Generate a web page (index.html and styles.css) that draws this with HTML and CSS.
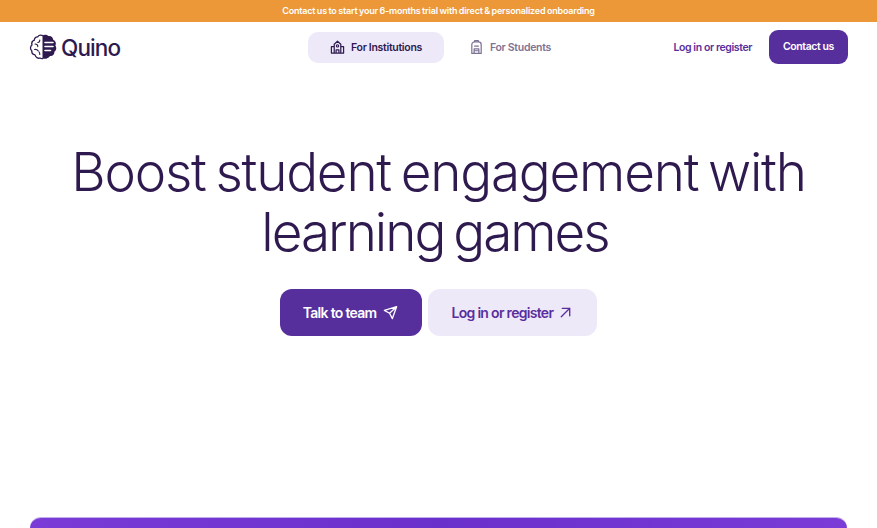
FILE: index.html
```html
<!DOCTYPE html>
<html lang="en">
	<head>
		<meta charset="UTF-8">
		<title>Quino</title>
		<link rel="stylesheet" href="styles.css">
	</head>
	<body>
		<div class="banner">Contact us to start your 6-months trial with direct &amp; personalized onboarding</div>

		<nav class="nav">
			<a class="logo">
				<svg class="logo-icon" width="28" height="26" viewBox="0 0 28 26">
					<path d="M14 1.600C12 .8 9.800 1 8.800 2.800 6.800 2.600 5.200 4.200 5.400 6.200 3.200 7 2.400 9 3 11 1 12.600 1 15.400 2.800 16.800 2.600 19 4 20.600 6 20.800 6.600 23.200 9 24.800 11 24 12.200 24.800 13.200 24.800 14 24.400" fill="none" stroke="#2e1a4f" stroke-width="1.300" stroke-linejoin="round"/>
					<path d="M6 10C7.800 10 8.800 11 8.800 12.600M5.500 15.500C7 15.200 8.300 15.600 9.200 16.800M10.800 6C10.800 7.500 10 8.500 8.800 8.500M10.800 20.500C10.800 19.500 10.800 18.500 10 17.800" fill="none" stroke="#2e1a4f" stroke-width="1.100" stroke-linecap="round"/>
					<path d="M13.500 1.500C15 .4 18 .6 19.400 2 22 1.600 24 3.200 24.200 5.800 26.600 6.800 27.600 9.400 26.400 11.600 27.900 13.600 27.500 16.600 25.400 17.800 25.600 20.400 23.600 22.400 21 22 19.400 24.600 16 25.400 13.500 24.400Z" fill="#2e1a4f"/>
					<path d="M16 8.500H24M16 12.500H24M16 16.500H21.500" stroke="#fff" stroke-width="1.600" stroke-linecap="round"/>
				</svg>
				<span>Quino</span>
			</a>

			<div class="tabs">
				<a class="tab active">
					<svg width="15" height="16" viewBox="0 0 16 16" fill="none" stroke="currentColor" stroke-width="1.300" stroke-linejoin="round">
						<path d="M1.500 14.500V7.500H4.500V14.500ZM11.500 14.500V7.500H14.500V14.500ZM4.500 14.500V5L8 1.800 11.500 5V14.500ZM1 14.500H15"/>
						<path d="M6.500 14.500V11H9.500V14.500"/>
						<circle cx="8" cy="6.800" r="1.200"/>
					</svg>
					For Institutions
				</a>
				<a class="tab">
					<svg width="15" height="16" viewBox="0 0 16 16" fill="none" stroke="currentColor" stroke-width="1.300" stroke-linejoin="round">
						<path d="M3 14.800V5.500C3 3.600 4.500 2.600 6 2.600H10C11.500 2.600 13 3.600 13 5.500V14.800Z"/>
						<path d="M6 2.600V1.200H10V2.600M5.500 7H10.500M5.500 14.800V10H10.500V14.800M5.500 12H10.500"/>
					</svg>
					For Students
				</a>
			</div>

			<div class="nav-right">
				<a class="login-link">Log in or register</a>
				<a class="contact-btn">Contact us</a>
			</div>
		</nav>

		<section class="hero">
			<h1>Boost student engagement with <span class="tight">learning games</span></h1>
			<div class="hero-buttons">
				<a class="btn btn-dark">
					Talk to team
					<svg width="15" height="15" viewBox="0 0 16 16" fill="none" stroke="currentColor" stroke-width="1.400" stroke-linejoin="round" stroke-linecap="round">
						<path d="M14.500 1.800 1.500 5.800 7 8.800 10 14.500ZM14.500 1.800 7 8.800"/>
					</svg>
				</a>
				<a class="btn btn-light">
					Log in or register
					<svg width="15" height="15" viewBox="0 0 16 16" fill="none" stroke="currentColor" stroke-width="1.400" stroke-linecap="round" stroke-linejoin="round">
						<path d="M3.500 12.500 12.500 3.500M4.500 3.500H12.500V11.500"/>
					</svg>
				</a>
			</div>
		</section>

		<div class="panel"></div>
	</body>
</html>
```

FILE: styles.css
```css
* {
	box-sizing: border-box;
}

body {
	margin: 0;
	background-color: #fff;
	color: #2e1a4f;
	font-family: "Inter", "Liberation Sans", sans-serif;
}

.banner {
	height: 22px;
	line-height: 22px;
	background-color: #ec9838;
	color: #fff;
	font-size: 9px;
	font-weight: 600;
	letter-spacing: -0.2px;
	word-spacing: -0.5px;
	text-align: center;
}

.nav {
	display: grid;
	grid-template-columns: 279px 1fr auto;
	align-items: center;
	height: 50px;
	padding: 0 29px;
}

.logo {
	display: flex;
	align-items: center;
	gap: 4px;
	font-size: 22.500px;
	font-weight: 500;
	letter-spacing: -0.9px;
}

.tabs {
	display: flex;
	gap: 3px;
}

.tab {
	display: flex;
	align-items: center;
	gap: 6px;
	height: 31px;
	padding: 0 22px;
	border-radius: 10px;
	color: #7e7394;
	font-size: 10.500px;
	font-weight: 600;
	letter-spacing: -0.3px;
}

.tab.active {
	background-color: #eee9f9;
	color: #2e1a4f;
}

.nav-right {
	display: flex;
	align-items: center;
	gap: 17px;
}

.login-link {
	color: #5a2e9c;
	font-size: 10.500px;
	font-weight: 600;
	letter-spacing: -0.4px;
}

.contact-btn {
	height: 34px;
	line-height: 34px;
	padding: 0 14px;
	border-radius: 9px;
	background-color: #572f9d;
	color: #fff;
	font-size: 10.500px;
	font-weight: 600;
	letter-spacing: -0.4px;
}

.hero {
	display: flex;
	flex-direction: column;
	align-items: center;
	padding-top: 70px;
}

.hero h1 {
	width: 780px;
	margin: 0;
	font-size: 53px;
	font-weight: 300;
	line-height: 60px;
	letter-spacing: -1.2px;
	word-spacing: -4px;
	text-align: center;
}

.hero h1 .tight {
	margin-right: 7px;
	letter-spacing: -2px;
}

.hero-buttons {
	display: flex;
	gap: 6px;
	margin-top: 27px;
}

.btn {
	display: flex;
	align-items: center;
	gap: 7px;
	height: 47px;
	padding: 0 24px 0 23px;
	border-radius: 12px;
	font-size: 14px;
	font-weight: 600;
	letter-spacing: -0.7px;
}

.btn-dark {
	background-color: #572f9d;
	color: #fff;
}

.btn-light {
	gap: 5px;
	background-color: #eee9f9;
	color: #5a2e9c;
}

.panel {
	height: 11px;
	margin: 181px 30px 0;
	border-top: 1px solid #c4adec;
	border-radius: 20px 20px 0 0;
	background: linear-gradient(90deg, #7a3bd6, #6a30cc 50%, #7a3bd6);
}
```
